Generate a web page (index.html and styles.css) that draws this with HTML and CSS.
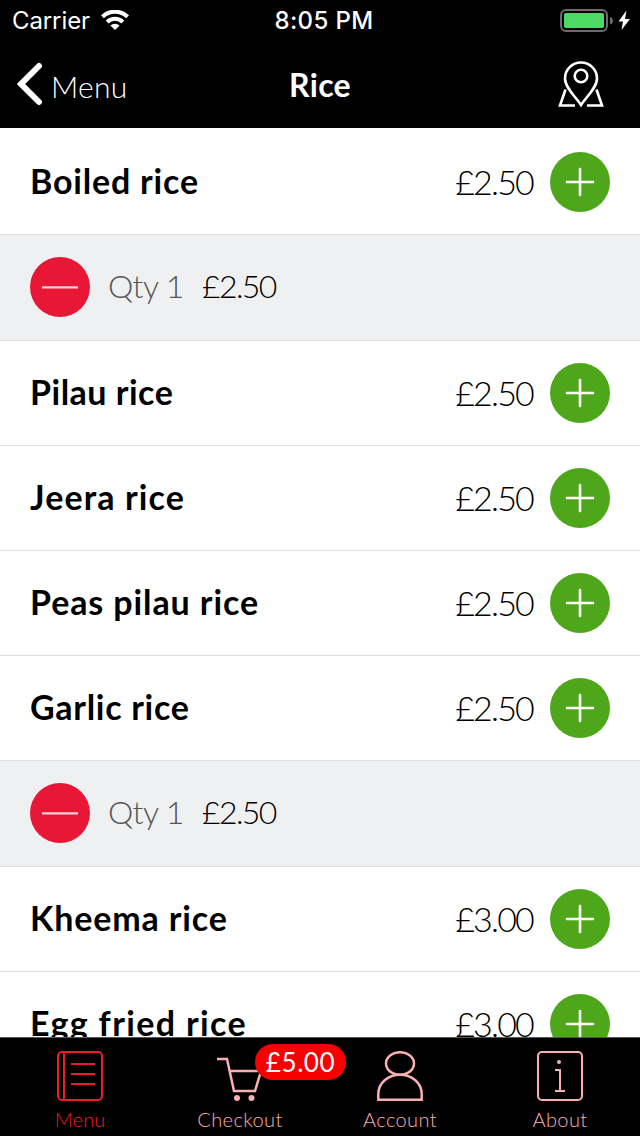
FILE: index.html
```html
<!DOCTYPE html>
<html lang="en">
<head>
<meta charset="utf-8">
<title>Rice</title>
<link rel="stylesheet" href="styles.css">
</head>
<body>
<div class="screen">
  <header class="header">
    <div class="status">
      <div class="status-left">
        <span class="carrier">Carrier</span>
        <svg class="wifi" width="28" height="20" viewBox="0 0 28 20"><g fill="none" stroke="#fff" stroke-width="4"><path d="M1.400 6.800a18 18 0 0 1 25.200 0"/><path d="M6.200 12a11.200 11.200 0 0 1 15.600 0"/></g><path d="M14 20l-4.600-4.500a6.600 6.600 0 0 1 9.200 0z" fill="#fff"/></svg>
      </div>
      <span class="clock">8:05 PM</span>
      <svg class="battery" width="72" height="24" viewBox="0 0 72 24"><rect x="1" y="1" width="46" height="21" rx="5" fill="none" stroke="#6b6b6b" stroke-width="2"/><rect x="4" y="4" width="40" height="15" rx="2" fill="#4cd964"/><path d="M50 8c4 1 4 6.500 0 7.500z" fill="#6b6b6b"/><path d="M66.500 1.500L58.500 12.500h4.500l-1.500 8.500 8.500-11h-5z" fill="#fff"/></svg>
    </div>
    <nav class="nav">
      <div class="back">
        <svg width="26" height="44" viewBox="0 0 26 44"><path d="M22 4L4 22l18 18" fill="none" stroke="#fff" stroke-width="6" stroke-linecap="round" stroke-linejoin="miter"/></svg>
        <span class="back-label">Menu</span>
      </div>
      <span class="title">Rice</span>
      <svg class="map" width="46" height="48" viewBox="0 0 46 48"><g fill="none" stroke="#fff" stroke-width="2.600"><path d="M23 45C18 37 7 28 7 18.500a16 16 0 0 1 32 0C39 28 28 37 23 45z"/><circle cx="23" cy="16" r="6.300"/><path d="M7.500 29.500L2 45.500h15M38.500 29.500l5.500 16H29"/></g></svg>
    </nav>
  </header>
  <main class="list">
    <div class="row first"><span class="name boiled">Boiled rice</span><span class="price">£2.50</span><svg class="button" viewBox="0 0 60 60"><circle cx="30" cy="30" r="30" fill="#4ea71a"/><path d="M17 30h26M30 17v26" stroke="#fff" stroke-width="2.600" stroke-linecap="round"/></svg></div>
    <div class="row quantity"><svg class="button" viewBox="0 0 60 60"><circle cx="30" cy="30" r="30" fill="#e91736"/><path d="M12 30.300h36" stroke="#fbd5da" stroke-width="2.200"/></svg><span class="qty">Qty 1</span><span class="subtotal">£2.50</span></div>
    <div class="row"><span class="name pilau">Pilau rice</span><span class="price">£2.50</span><svg class="button" viewBox="0 0 60 60"><circle cx="30" cy="30" r="30" fill="#4ea71a"/><path d="M17 30h26M30 17v26" stroke="#fff" stroke-width="2.600" stroke-linecap="round"/></svg></div>
    <div class="row"><span class="name jeera">Jeera rice</span><span class="price">£2.50</span><svg class="button" viewBox="0 0 60 60"><circle cx="30" cy="30" r="30" fill="#4ea71a"/><path d="M17 30h26M30 17v26" stroke="#fff" stroke-width="2.600" stroke-linecap="round"/></svg></div>
    <div class="row"><span class="name peas">Peas pilau rice</span><span class="price">£2.50</span><svg class="button" viewBox="0 0 60 60"><circle cx="30" cy="30" r="30" fill="#4ea71a"/><path d="M17 30h26M30 17v26" stroke="#fff" stroke-width="2.600" stroke-linecap="round"/></svg></div>
    <div class="row"><span class="name garlic">Garlic rice</span><span class="price">£2.50</span><svg class="button" viewBox="0 0 60 60"><circle cx="30" cy="30" r="30" fill="#4ea71a"/><path d="M17 30h26M30 17v26" stroke="#fff" stroke-width="2.600" stroke-linecap="round"/></svg></div>
    <div class="row quantity"><svg class="button" viewBox="0 0 60 60"><circle cx="30" cy="30" r="30" fill="#e91736"/><path d="M12 30.300h36" stroke="#fbd5da" stroke-width="2.200"/></svg><span class="qty">Qty 1</span><span class="subtotal">£2.50</span></div>
    <div class="row"><span class="name kheema">Kheema rice</span><span class="price">£3.00</span><svg class="button" viewBox="0 0 60 60"><circle cx="30" cy="30" r="30" fill="#4ea71a"/><path d="M17 30h26M30 17v26" stroke="#fff" stroke-width="2.600" stroke-linecap="round"/></svg></div>
    <div class="row"><span class="name egg">Egg fried rice</span><span class="price">£3.00</span><svg class="button" viewBox="0 0 60 60"><circle cx="30" cy="30" r="30" fill="#4ea71a"/><path d="M17 30h26M30 17v26" stroke="#fff" stroke-width="2.600" stroke-linecap="round"/></svg></div>
  </main>
  <footer class="tabs">
    <div class="tab active">
      <svg width="46" height="50" viewBox="0 0 46 50"><g fill="none" stroke="currentColor" stroke-width="2"><rect x="1" y="1" width="44" height="48" rx="4"/><path d="M7 1v48M14 13h24M14 23h24M14 33h24"/></g></svg>
      <span class="tab-label menu-label">Menu</span>
    </div>
    <div class="tab">
      <svg width="46" height="50" viewBox="0 0 46 50"><path d="M0 8h10l7 32h21l6-20H13" fill="none" stroke="currentColor" stroke-width="2.500"/><circle cx="20" cy="47" r="3" fill="currentColor"/><circle cx="34.500" cy="47" r="3" fill="currentColor"/></svg>
      <span class="tab-label checkout-label">Checkout</span>
      <span class="badge">£5.00</span>
    </div>
    <div class="tab">
      <svg width="46" height="50" viewBox="0 0 46 50"><g fill="none" stroke="currentColor" stroke-width="2.500"><ellipse cx="23" cy="12.500" rx="14" ry="11.300"/><path d="M1.300 48.700V43C1.300 32 11 23.800 23 23.800S44.700 32 44.700 43v5.700z"/></g></svg>
      <span class="tab-label account-label">Account</span>
    </div>
    <div class="tab">
      <svg width="46" height="50" viewBox="0 0 46 50"><g fill="none" stroke="currentColor" stroke-width="2"><rect x="1" y="1" width="44" height="48" rx="4"/><path d="M18 19h5v21M18 40h10"/></g><circle cx="22" cy="11" r="2" fill="currentColor"/></svg>
      <span class="tab-label about-label">About</span>
    </div>
  </footer>
</div>
</body>
</html>
```
FILE: styles.css
```css
* { box-sizing: border-box; }
body { margin: 0; }
svg { display: block; flex: none; }
span { white-space: nowrap; }
.screen {
  width: 640px;
  height: 1136px;
  display: flex;
  flex-direction: column;
  overflow: hidden;
  background: #fff;
  font-family: Lato, "Liberation Sans", sans-serif;
  color: #000;
}
.header { height: 128px; flex: none; background: #000; color: #fff; }
.status {
  height: 42px;
  padding: 0 8px 0 12px;
  display: grid;
  grid-template-columns: 1fr auto 1fr;
  align-items: center;
  font: 24px/42px Inter, sans-serif;
}
.status-left { display: flex; align-items: center; gap: 11px; }
.wifi { margin-top: -2px; }
.carrier { letter-spacing: -0.1px; }
.clock { font-weight: 500; letter-spacing: 0.4px; padding-left: 4px; }
.battery { justify-self: end; }
.nav {
  height: 86px;
  padding: 0 36px 2px 17px;
  display: grid;
  grid-template-columns: 1fr auto 1fr;
  align-items: center;
}
.back { display: flex; align-items: center; gap: 8px; }
.back-label { font-size: 30px; font-weight: 300; letter-spacing: 0.3px; padding-top: 4px; }
.title { font-size: 32px; font-weight: 700; padding-left: 19px; letter-spacing: 0.3px; }
.map { justify-self: end; }
.list { flex: 1; min-height: 0; overflow: hidden; }
.row {
  height: 105px;
  padding: 22px 30px 0;
  border-bottom: 1px solid #dedfe0;
  display: flex;
  align-items: flex-start;
}
.first { height: 107px; padding-top: 24px; }
.quantity { height: 106px; background: #eff0f2; }
.button { width: 60px; height: 60px; }
.name { flex: 1; font-size: 34px; line-height: 58px; font-weight: 700; letter-spacing: 0.5px; }
.boiled { letter-spacing: 0.8px; }
.jeera { letter-spacing: 1.1px; }
.peas { letter-spacing: 0.9px; }
.garlic { letter-spacing: 0.7px; }
.kheema { letter-spacing: 0.85px; }
.egg { letter-spacing: 1.35px; }
.price { font-size: 34px; line-height: 59px; font-weight: 300; letter-spacing: -1.8px; margin-right: 17px; }
.qty { margin-left: 18px; width: 94px; font-size: 32px; line-height: 58px; font-weight: 300; letter-spacing: -0.6px; color: #555; }
.subtotal { font-size: 32px; line-height: 58px; font-weight: 300; letter-spacing: -1.6px; }
.tabs {
  height: 99px;
  flex: none;
  border-top: 1px solid #555;
  background: #000;
  color: #faafb1;
  display: grid;
  grid-template-columns: repeat(4, 1fr);
}
.tab { position: relative; padding-top: 13px; display: flex; flex-direction: column; align-items: center; }
.active { color: #ee1c25; }
.tab-label { font-size: 20px; line-height: 24px; font-weight: 300; letter-spacing: 0.4px; margin-top: 6px; }
.menu-label { letter-spacing: 0.1px; }
.badge {
  position: absolute;
  left: 95px;
  top: 6px;
  width: 91px;
  height: 36px;
  border-radius: 18px;
  background: #f70000;
  color: #fff;
  font-size: 26px;
  line-height: 36px;
  letter-spacing: 0.6px;
  text-align: center;
}
```
